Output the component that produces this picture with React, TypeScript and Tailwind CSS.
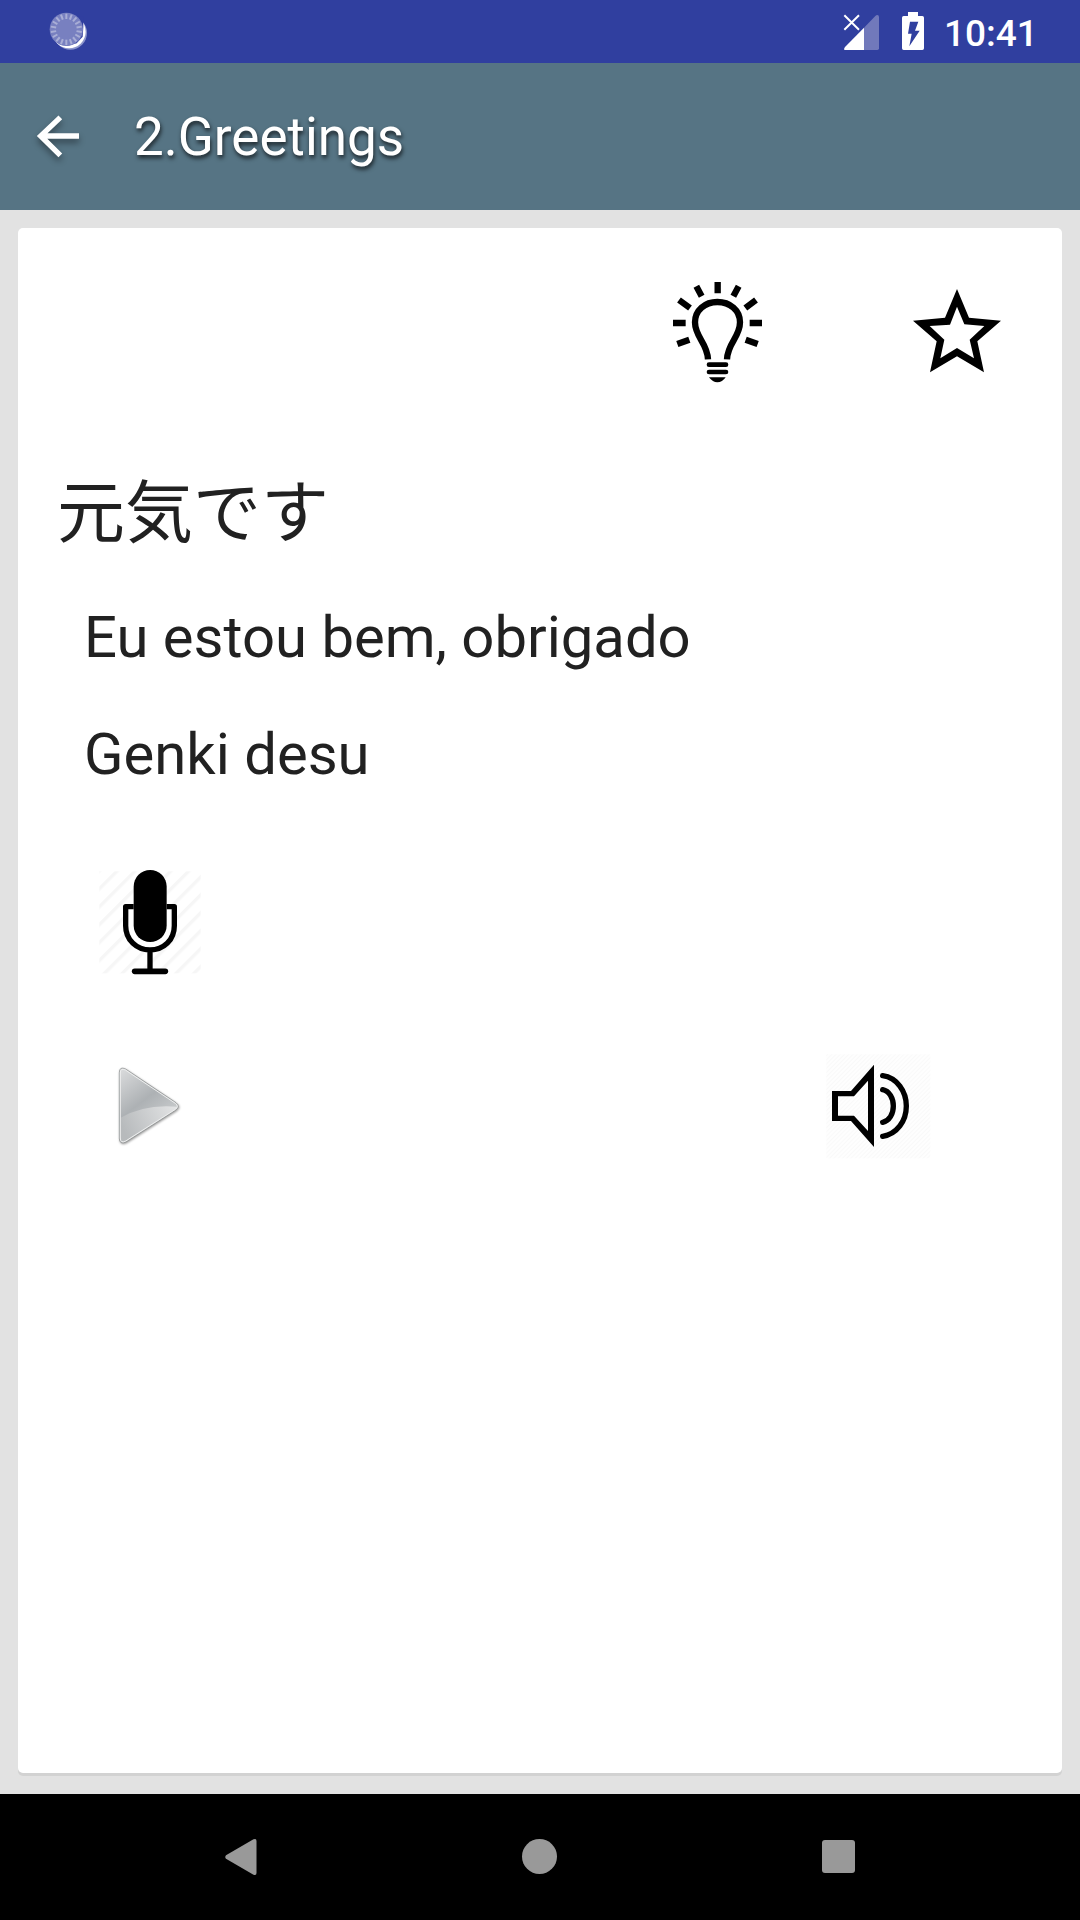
const ticks = [0, 20, 40, 60, 80, 100, 120, 140, 160, 180, 200, 220, 240, 260, 280, 300, 320, 340];

const StatusBar = () => {
  return (
    <div className="h-[63px] bg-[#303f9f] flex items-start text-white">
      <svg className="ml-10 w-[60px] h-[60px]" viewBox="0 0 180 180">
        <circle cx="91" cy="99" r="50" fill="#8b94cb" />
        <circle cx="87" cy="95" r="50" fill="#fff" />
        <path d="M40 50H130V80L128 110 110 130 80 138 65 132Z" fill="#303f9f" />
        <circle cx="79" cy="88" r="50" fill="#7880c0" />
        {ticks.map((a) => (
          <path
            key={a}
            d="M79 41V57"
            stroke="#a9aed6"
            strokeWidth="6"
            transform={`rotate(${a} 79 88)`}
          />
        ))}
      </svg>
      <svg className="ml-[740px] w-[44px] h-[60px]" viewBox="0 0 132 180">
        <path d="M117 51Q117 45 112 45Q109 45 106 48L72 83V150H112Q117 150 117 145Z" fill="#7179bb" />
        <path d="M72 83L15 141Q11 146 13 150H72Z" fill="#fff" />
        <path d="M13 46L57 89M57 46L13 89" stroke="#fff" strokeWidth="6" />
      </svg>
      <svg className="ml-[11px] w-[32px] h-[60px]" viewBox="0 0 96 180">
        <path d="M39 36H69V48H82Q87 48 87 53V145Q87 150 82 150H26Q21 150 21 145V53Q21 48 26 48H39Z" fill="#fff" />
        <path d="M45 65H70L60 92H74L43 139L50 101H39Z" fill="#303f9f" />
      </svg>
      <span className="ml-[17px] mt-[12px] text-[37px] leading-[44px] font-medium">10:41</span>
    </div>
  );
};

const Toolbar = () => {
  return (
    <div className="h-[147px] bg-[#567484] flex items-start text-white">
      <svg
        className="mt-[45px] ml-[30px] w-[60px] h-[60px] overflow-visible drop-shadow-[0_4px_3px_rgba(0,0,0,0.4)]"
        viewBox="0 0 180 180"
      >
        <path d="M147 84H35M91 28L32 84L91 142" fill="none" stroke="#fff" strokeWidth="16" />
      </svg>
      <h1 className="mt-[43px] ml-[44px] text-[53px] leading-[62px] [text-shadow:1px_3px_4px_rgba(0,0,0,0.7)]">
        2.Greetings
      </h1>
    </div>
  );
};

const BulbIcon = () => {
  return (
    <svg className="w-[120px] h-[120px]" viewBox="0 0 360 360">
      <path
        d="M144 268C142 218 105 202 105 157C105 121 135 96 172 96C210 96 240 121 240 157C240 202 203 218 201 268"
        fill="none"
        stroke="#000"
        strokeWidth="19"
      />
      <path
        d="M173 36V70M236 49L220 79M288 90L256 114M306 159H269M293 222L257 209M109 49L125 79M57 90L90 114M39 159H77M52 222L88 209"
        stroke="#000"
        strokeWidth="19"
      />
      <path d="M147 284H198M147 306H198" stroke="#000" strokeWidth="14" strokeLinecap="round" />
      <path d="M147 322H197Q187 337 172 337Q158 337 147 322Z" />
    </svg>
  );
};

const StarIcon = () => {
  return (
    <svg className="w-[120px] h-[120px]" viewBox="0 0 360 360">
      <path
        fillRule="evenodd"
        d="M171 57L207 143L303 152L232 214L252 307L171 259L90 307L110 214L39 152L135 143ZM171 110L150 164L89 168L133 209L121 265L171 234L222 265L209 209L253 168L193 163Z"
      />
    </svg>
  );
};

const MicIcon = () => {
  return (
    <svg className="w-[120px] h-[125px]" viewBox="0 0 360 375">
      <defs>
        <pattern id="mic-lines" width="38" height="38" patternUnits="userSpaceOnUse" patternTransform="rotate(45)">
          <rect width="10" height="38" fill="#f6f6f6" />
        </pattern>
      </defs>
      <rect x="28" y="34" width="304" height="306" fill="url(#mic-lines)" />
      <path d="M115 147V195A65 68 0 0 0 245 195V147Z" fill="#fff" />
      <rect x="131" y="30" width="99" height="216" rx="49.5" />
      <path
        d="M131 140H107V197C107 240 140 270 180 270C221 270 253 240 253 197V140H230M180 270V334"
        fill="none"
        stroke="#000"
        strokeWidth="16"
        strokeLinejoin="round"
      />
      <path d="M134 334H226" stroke="#000" strokeWidth="17" strokeLinecap="round" />
    </svg>
  );
};

const PlayIcon = () => {
  return (
    <svg className="w-[100px] h-[110px]" viewBox="0 0 300 330">
      <defs>
        <linearGradient id="play-body" x1="0" y1="0" x2="0.6" y2="1">
          <stop offset="0" stopColor="#dcddde" />
          <stop offset="0.5" stopColor="#adb1b4" />
          <stop offset="1" stopColor="#d5d7d8" />
        </linearGradient>
        <linearGradient id="play-gloss" x1="0" y1="0.5" x2="1" y2="0.2">
          <stop offset="0" stopColor="#b7babc" />
          <stop offset="1" stopColor="#e2e3e4" />
        </linearGradient>
      </defs>
      <g className="drop-shadow-[2px_3px_3px_rgba(0,0,0,0.4)]">
        <path
          d="M58 68Q58 48 77 57L228 158Q242 169 228 180L78 276Q58 285 58 265Z"
          fill="url(#play-body)"
          stroke="#8d8f90"
          strokeWidth="2"
        />
      </g>
      <path d="M62 203Q135 161 232 170Q231 175 226 178L77 272Q62 281 62 264Z" fill="url(#play-gloss)" />
      <path
        d="M61 69Q61 53 76 60L226 160Q238 169 226 178L77 273Q61 281 61 264Z"
        fill="none"
        stroke="#eeefef"
        strokeWidth="3"
      />
    </svg>
  );
};

const SpeakerIcon = () => {
  return (
    <svg className="w-[130px] h-[120px]" viewBox="0 0 390 360">
      <defs>
        <pattern id="speaker-lines" width="9" height="9" patternUnits="userSpaceOnUse" patternTransform="rotate(45)">
          <rect width="9" height="9" fill="#fefefe" />
          <rect width="3" height="9" fill="#f9f9f9" />
        </pattern>
      </defs>
      <rect x="34" y="28" width="312" height="312" fill="url(#speaker-lines)" />
      <path
        fillRule="evenodd"
        d="M177 59V306L108 228H51V138H108ZM159 107L117 154H69V212H117L159 258Z"
      />
      <path
        d="M203 92C246 98 274 139 274 183C274 228 246 267 203 274M203 134C223 138 235 160 235 183C235 207 223 228 203 232"
        fill="none"
        stroke="#000"
        strokeWidth="16"
        strokeLinecap="round"
      />
    </svg>
  );
};

const Card = () => {
  return (
    <div className="h-[1545px] bg-white rounded-[5px] shadow-[0_3px_0_#d2d2d2] text-[#212121]">
      <div className="flex justify-end gap-[120px] pt-[42px] pr-[42px]">
        <BulbIcon />
        <StarIcon />
      </div>
      <p className="mt-[78px] ml-[39px] text-[68px] leading-[80px] font-['Noto_Sans_CJK_JP',sans-serif]" lang="ja">
        元気です
      </p>
      <p className="mt-[55px] ml-[66px] text-[58px] leading-[68px]">Eu estou bem, obrigado</p>
      <p className="mt-[49px] ml-[66px] text-[58px] leading-[68px]">Genki desu</p>
      <div className="mt-[72px] ml-[72px]">
        <MicIcon />
      </div>
      <div className="mt-[60px] ml-[82px] mr-[117px] flex items-start justify-between">
        <div className="pt-[5px]">
          <PlayIcon />
        </div>
        <SpeakerIcon />
      </div>
    </div>
  );
};

const NavBar = () => {
  return (
    <div className="h-[126px] bg-black flex items-center justify-between pb-px pl-[221px] pr-[225px]">
      <svg className="w-[40px] h-[40px]" viewBox="0 0 40 40">
        <path d="M5 18.2L32.5 2.3Q35.5 1 35.5 4V36Q35.5 39 32.5 37.7L5 21.8Q3.5 20 5 18.2Z" fill="#999" />
      </svg>
      <div className="mr-[5px] w-[35px] h-[35px] rounded-full bg-[#999]" />
      <div className="w-[33px] h-[33px] rounded-[3px] bg-[#999]" />
    </div>
  );
};

const App = () => {
  return (
    <div className="w-[1080px] h-[1920px] flex flex-col bg-[#e2e2e2] overflow-hidden font-[Roboto,sans-serif]">
      <StatusBar />
      <Toolbar />
      <div className="flex-1 px-[18px] pt-[18px]">
        <Card />
      </div>
      <NavBar />
    </div>
  );
};

export default App;
